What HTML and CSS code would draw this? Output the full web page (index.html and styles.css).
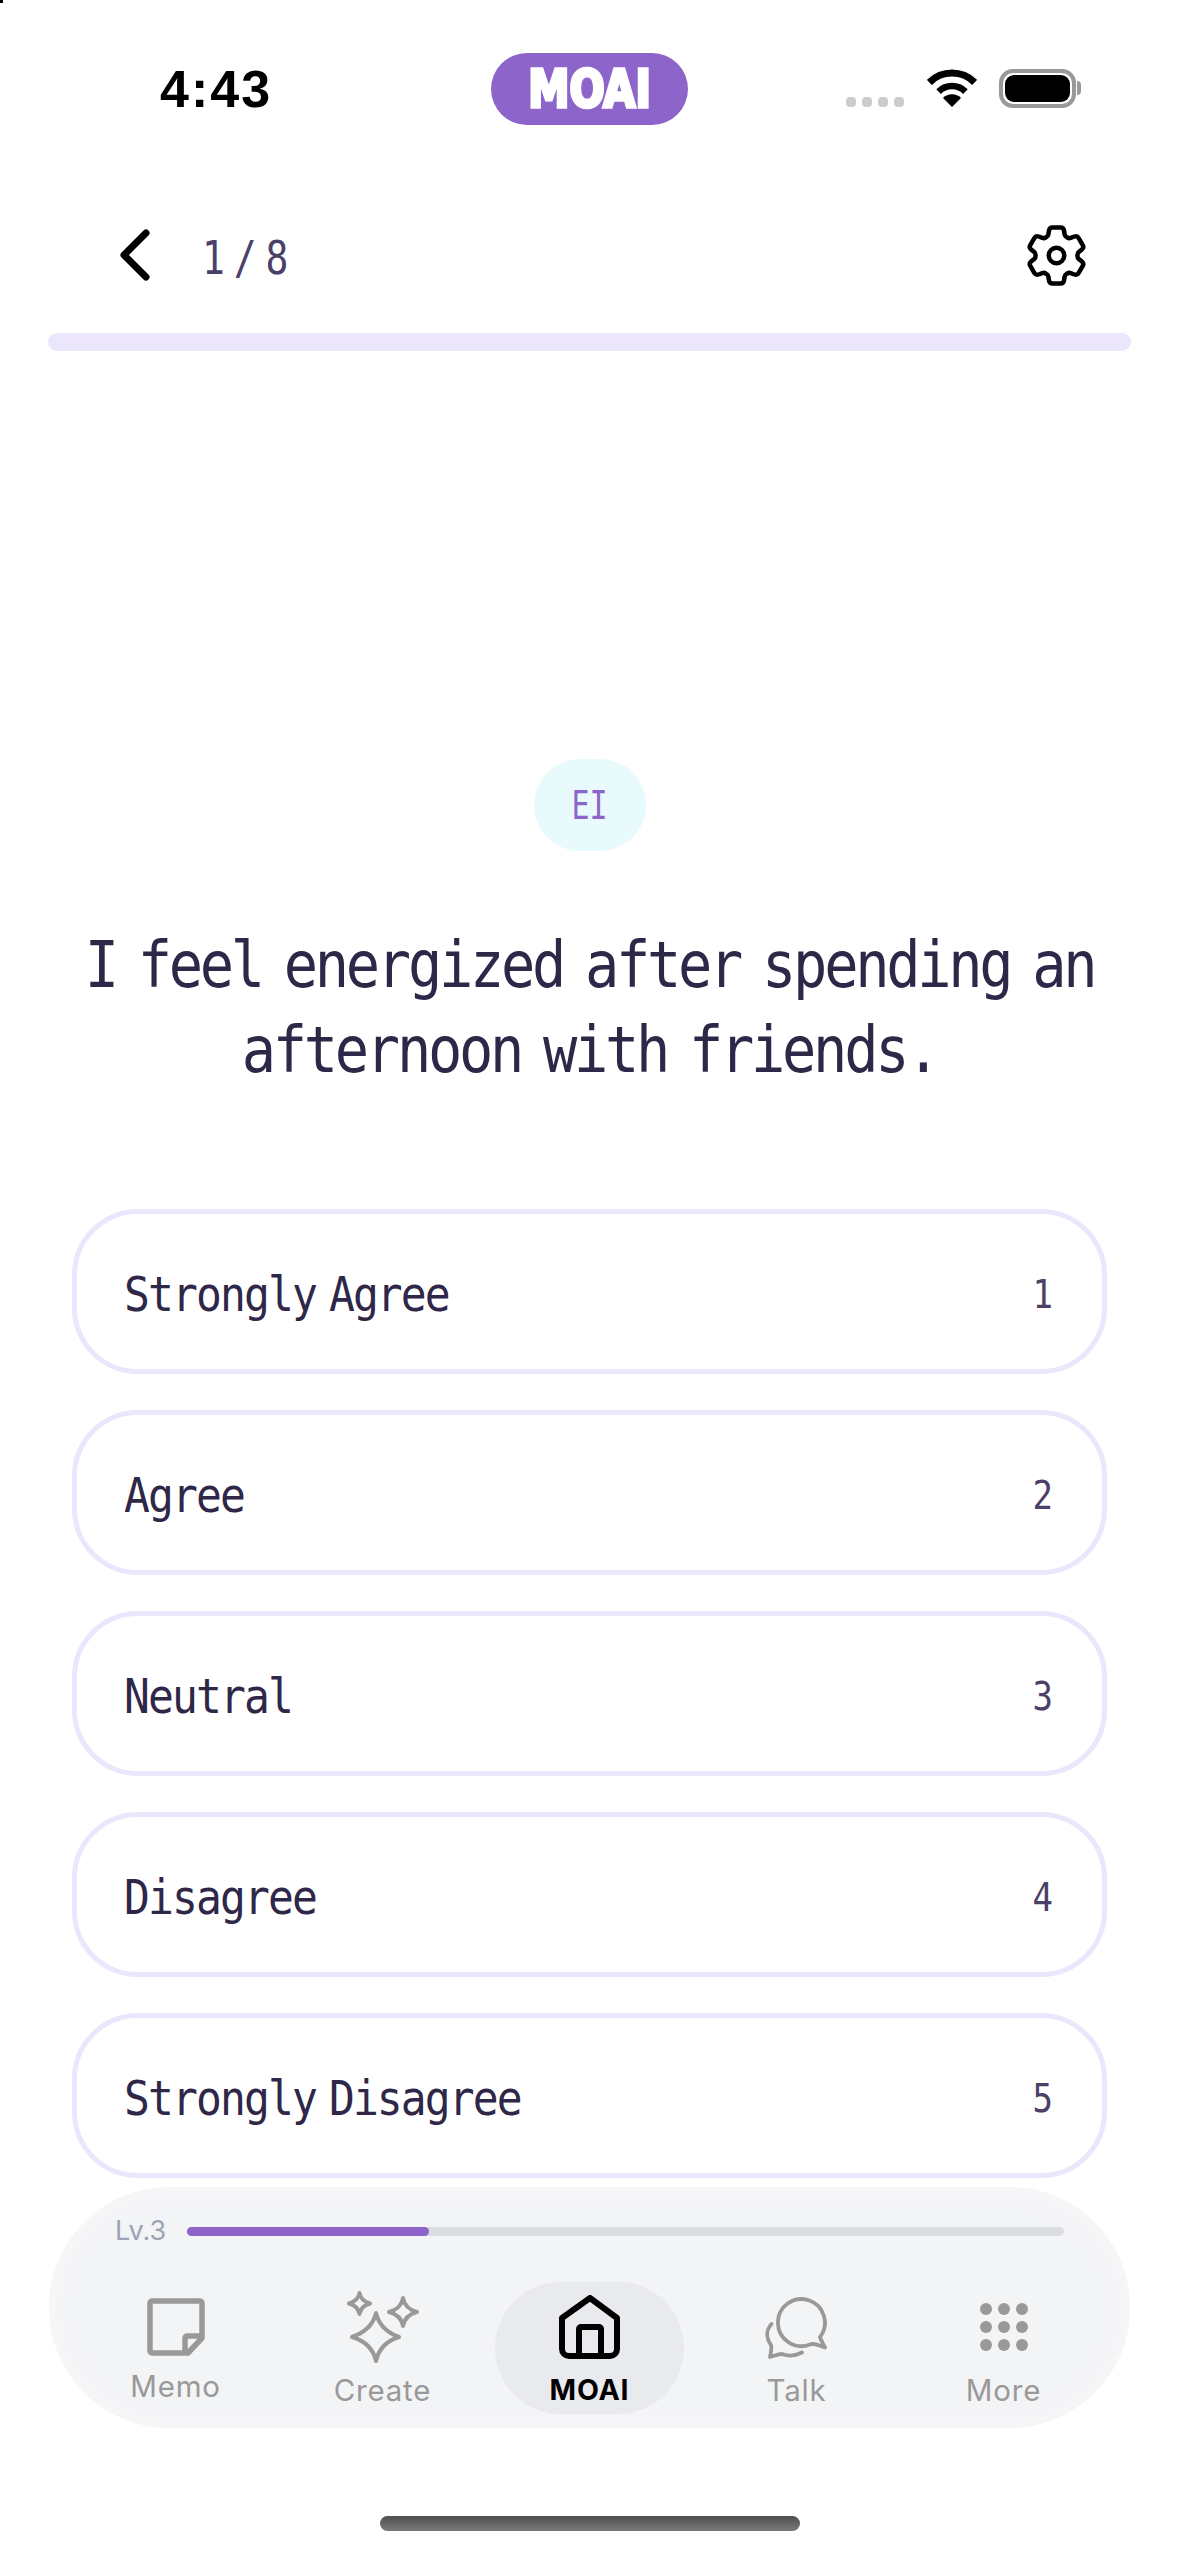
FILE: index.html
```html
<!DOCTYPE html>
<html lang="en">
<head>
  <meta charset="UTF-8" />
  <meta name="viewport" content="width=device-width, initial-scale=1.0"/>
  <title>MOAI Test</title>
  <link rel="stylesheet" href="styles.css">
</head>
<body>
  <div class="corner-speck"></div>

  <div class="status-bar">
    <div class="status-time">4:43</div>
    <div class="status-logo"><span>MOAI</span></div>
    <div class="status-icons">
      <div class="signal-dots"><i></i><i></i><i></i><i></i></div>
      <svg class="wifi-icon" width="50" height="38" viewBox="0 0 50 38">
        <path d="M2.4 13.4A32 32 0 0 1 47.6 13.4" fill="none" stroke="#000" stroke-width="7"/>
        <path d="M11.6 22.6A19 19 0 0 1 38.4 22.6" fill="none" stroke="#000" stroke-width="6.5"/>
        <path d="M25 38L16 29A12.7 12.7 0 0 1 34 29Z" fill="#000"/>
      </svg>
      <div class="battery"><div class="battery-level"></div></div>
      <div class="battery-nub"></div>
    </div>
  </div>

  <div class="top-nav">
    <svg class="back-icon" width="30" height="52" viewBox="0 0 30 52">
      <path d="M26 4L4 26L26 48" fill="none" stroke="#000" stroke-width="7" stroke-linecap="round" stroke-linejoin="round"/>
    </svg>
    <div class="page-count">1 / 8</div>
    <svg class="gear-icon" width="59" height="61" viewBox="2.5 2.2 19 19.6" fill="none" stroke="#000" stroke-width="1.45" stroke-linejoin="round">
      <path d="M9.594 3.94c.09-.542.56-.94 1.11-.94h2.593c.55 0 1.02.398 1.11.94l.213 1.281c.063.374.313.686.645.87.074.04.147.083.22.127.325.196.72.257 1.075.124l1.217-.456a1.125 1.125 0 0 1 1.37.49l1.296 2.247a1.125 1.125 0 0 1-.26 1.431l-1.003.827c-.293.241-.438.613-.43.992a7.723 7.723 0 0 1 0 .255c-.008.378.137.75.43.991l1.004.827c.424.35.534.955.26 1.43l-1.298 2.247a1.125 1.125 0 0 1-1.369.491l-1.217-.456c-.355-.133-.75-.072-1.076.124a6.47 6.47 0 0 1-.22.128c-.331.183-.581.495-.644.869l-.213 1.281c-.09.543-.56.94-1.11.94h-2.594c-.55 0-1.019-.398-1.11-.94l-.213-1.281c-.062-.374-.312-.686-.644-.87a6.52 6.52 0 0 1-.22-.127c-.325-.196-.72-.257-1.076-.124l-1.217.456a1.125 1.125 0 0 1-1.369-.49l-1.297-2.247a1.125 1.125 0 0 1 .26-1.431l1.004-.827c.292-.24.437-.613.43-.991a6.932 6.932 0 0 1 0-.255c.007-.38-.138-.751-.43-.992l-1.004-.827a1.125 1.125 0 0 1-.26-1.43l1.297-2.247a1.125 1.125 0 0 1 1.37-.491l1.216.456c.356.133.751.072 1.076-.124.072-.044.146-.086.22-.128.332-.183.582-.495.644-.869l.214-1.28Z"/>
      <circle cx="12" cy="12" r="2.5"/>
    </svg>
  </div>

  <div class="progress-track"></div>

  <div class="question-block">
    <div class="category-badge"><span>EI</span></div>
    <h1 class="question">I feel energized after spending an<br>afternoon with friends.</h1>
  </div>

  <div class="answers">
    <div class="answer"><span class="answer-text">Strongly Agree</span><span class="answer-num">1</span></div>
    <div class="answer"><span class="answer-text">Agree</span><span class="answer-num">2</span></div>
    <div class="answer"><span class="answer-text">Neutral</span><span class="answer-num">3</span></div>
    <div class="answer"><span class="answer-text">Disagree</span><span class="answer-num">4</span></div>
    <div class="answer"><span class="answer-text">Strongly Disagree</span><span class="answer-num">5</span></div>
  </div>

  <div class="tab-bar">
    <div class="level-row">
      <span class="level-label">Lv.3</span>
      <div class="level-track"><div class="level-fill" style="width: 27.6%;"></div></div>
    </div>
    <div class="tabs">
      <div class="tab tab-memo">
        <div class="tab-icon">
          <svg width="58" height="58" viewBox="0 0 58 58" fill="none" stroke="#999" stroke-width="5.5" stroke-linejoin="round">
            <path d="M5 3H53a2 2 0 0 1 2 2V40L41 55H5a2 2 0 0 1-2-2V5a2 2 0 0 1 2-2Z"/>
            <path d="M38 55V40a2 2 0 0 1 2-2H55"/>
          </svg>
        </div>
        <span class="tab-label">Memo</span>
      </div>
      <div class="tab">
        <div class="tab-icon">
          <svg width="72" height="72" viewBox="0 0 72 72" fill="none" stroke="#999" stroke-width="4" stroke-linejoin="round">
            <path d="M29 22Q33 39 52 46Q33 52 29 70Q25 52 5 46Q25 39 29 22Z"/>
            <path d="M12.5 2Q14 10 23 12.5Q14 15 12.5 23Q11 15 2 12.5Q11 10 12.5 2Z"/>
            <path d="M56 7Q58 18 70 21Q58 24 56 35Q54 24 42 21Q54 18 56 7Z"/>
          </svg>
        </div>
        <span class="tab-label">Create</span>
      </div>
      <div class="tab tab-active">
        <div class="tab-icon">
          <svg width="62" height="64" viewBox="0 0 62 64" fill="none" stroke="#000" stroke-width="6" stroke-linejoin="round">
            <path d="M31 3L58 23V54a7 7 0 0 1-7 7H10a7 7 0 0 1-7-7V23Z"/>
            <path d="M20 61V34a2 2 0 0 1 2-2H40a2 2 0 0 1 2 2V61"/>
          </svg>
        </div>
        <span class="tab-label">MOAI</span>
      </div>
      <div class="tab">
        <div class="tab-icon">
          <svg width="64" height="63" viewBox="0 0 64 63" fill="none" stroke="#999" stroke-width="3.8" stroke-linecap="round" stroke-linejoin="round">
            <path d="M55 41A23.5 23.5 0 1 0 45 48.5C50 46.5 55 50 60 51.5C58.5 48 56 45 55 41Z"/>
            <path d="M6.5 28C1 34 1 42 6 49C7 53 6 57 5 61C9 60 13 58 17 58C24 61 30 60 37 56.5"/>
          </svg>
        </div>
        <span class="tab-label">Talk</span>
      </div>
      <div class="tab">
        <div class="tab-icon">
          <div class="dots-grid"><i></i><i></i><i></i><i></i><i></i><i></i><i></i><i></i><i></i></div>
        </div>
        <span class="tab-label">More</span>
      </div>
    </div>
  </div>

  <div class="home-indicator"></div>
</body>
</html>
```

FILE: styles.css
```css
body {
  margin: 0;
  width: 1179px;
  height: 2556px;
  overflow: hidden;
  background: #fff;
  position: relative;
  font-family: "DejaVu Sans Mono", monospace;
}
.corner-speck {
  position: absolute;
  left: 0;
  top: 0;
  width: 3px;
  height: 3px;
  background: #000;
}

/* status bar */
.status-bar {
  display: grid;
  grid-template-columns: 331px 197px 1fr;
  align-items: center;
  height: 72px;
  padding: 53px 98px 0 160px;
  box-sizing: content-box;
  width: 921px;
}
.status-time {
  font-family: "Liberation Sans", sans-serif;
  font-weight: 700;
  font-size: 52px;
  letter-spacing: 2px;
  color: #000;
}
.status-logo {
  height: 72px;
  border-radius: 36px;
  background: #8d64c9;
  display: flex;
  align-items: center;
  justify-content: center;
}
.status-logo span {
  font-family: "DejaVu Sans", sans-serif;
  font-stretch: condensed;
  font-weight: 700;
  font-size: 46px;
  line-height: 46px;
  color: #fff;
  -webkit-text-stroke: 3px #fff;
  transform: scaleY(1.12);
}
.status-icons {
  display: flex;
  justify-content: flex-end;
  align-items: flex-start;
  height: 39px;
  margin-top: -2px;
}
.signal-dots {
  display: flex;
  gap: 6px;
  margin-top: 28px;
  margin-right: 23px;
}
.signal-dots i {
  width: 10px;
  height: 10px;
  border-radius: 4px;
  background: #ccc;
}
.battery {
  width: 77px;
  height: 39px;
  margin-left: 22px;
  box-sizing: border-box;
  border: 4px solid #999;
  border-radius: 14px;
  padding: 2px;
}
.battery-level {
  height: 100%;
  background: #000;
  border-radius: 9px;
}
.battery-nub {
  width: 4px;
  height: 14px;
  margin: 12px 0 0 1px;
  background: #999;
  border-radius: 0 4px 4px 0;
}

/* header */
.top-nav {
  display: flex;
  align-items: center;
  height: 60px;
  margin-top: 100px;
  padding: 0 93px 0 120px;
}
.page-count {
  margin: 6px 0 0 52px;
  font-size: 38px;
  word-spacing: -14px;
  color: #4a4068;
  transform: scaleY(1.2);
}
.gear-icon {
  margin-left: auto;
}
.progress-track {
  height: 18px;
  margin: 48px 48px 0;
  border-radius: 9px;
  background: #ebe6fc;
}

/* question */
.question-block {
  display: flex;
  flex-direction: column;
  align-items: center;
  margin-top: 408px;
}
.category-badge {
  width: 112px;
  height: 92px;
  border-radius: 46px;
  background: #e9fafd;
  display: flex;
  align-items: center;
  justify-content: center;
}
.category-badge span {
  font-size: 30px;
  color: #8d64c9;
  transform: scaleY(1.3);
}
.question {
  margin: 81px 0 0;
  font-size: 57px;
  font-weight: 400;
  line-height: 75.7px;
  letter-spacing: -3.3px;
  word-spacing: -9px;
  text-align: center;
  color: #2f2748;
  transform: scaleY(1.13);
}

/* answers */
.answers {
  display: flex;
  flex-direction: column;
  gap: 36px;
  margin: 126px 72px 0;
}
.answer {
  height: 165px;
  box-sizing: border-box;
  border: 5px solid #ebe6fc;
  border-radius: 66px;
  padding: 4px 49px 0 47px;
  display: flex;
  align-items: center;
  justify-content: space-between;
}
.answer-text {
  font-size: 43px;
  letter-spacing: -1.9px;
  word-spacing: -11px;
  color: #2f2748;
  transform: scaleY(1.12);
}
.answer-num {
  font-size: 34px;
  color: #4a4068;
  transform: scaleY(1.13);
}

/* bottom tabs */
.tab-bar {
  height: 241px;
  box-sizing: border-box;
  margin: 9px 49px 0;
  padding: 34px 23px 0;
  border-radius: 120px;
  background: #f3f4f6;
  box-shadow: inset 0 0 28px #f8f9f9;
  font-family: Inter, sans-serif;
}
.level-row {
  display: flex;
  align-items: center;
  gap: 21px;
  height: 20px;
  padding: 0 43px;
}
.level-label {
  font-size: 27px;
  line-height: 20px;
  color: #9ca3b3;
}
.level-track {
  flex: 1;
  height: 9px;
  border-radius: 5px;
  background: #dcdde1;
}
.level-fill {
  height: 100%;
  border-radius: 5px;
  background: #8d64c9;
}
.tabs {
  display: grid;
  grid-template-columns: repeat(5, 1fr);
  margin-top: 41px;
}
.tab {
  height: 132px;
  box-sizing: border-box;
  padding-top: 9px;
  display: flex;
  flex-direction: column;
  align-items: center;
  color: #999;
}
.tab-active {
  width: 189px;
  justify-self: center;
  border-radius: 66px;
  background: #e9eaed;
  color: #000;
}
.tab-icon {
  height: 72px;
  display: flex;
  align-items: center;
  justify-content: center;
}
.tab-label {
  margin-top: 10px;
  font-size: 29.5px;
  line-height: 34px;
  letter-spacing: 0.8px;
}
.tab-memo .tab-label {
  margin-top: 6px;
}
.tab-active .tab-label {
  font-weight: 700;
  font-size: 28.5px;
}
.dots-grid {
  display: grid;
  grid-template-columns: repeat(3, 12px);
  gap: 6px;
}
.dots-grid i {
  height: 12px;
  border-radius: 50%;
  background: #999;
}

.home-indicator {
  width: 420px;
  height: 15px;
  margin: 88px auto 0;
  border-radius: 8px;
  background: linear-gradient(to bottom, #4f4f4f, #7a7a7a);
}
```
